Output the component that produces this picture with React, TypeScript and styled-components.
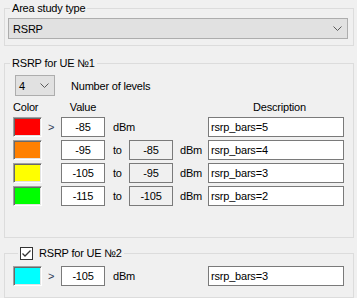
import React from 'react'
import styled, {createGlobalStyle} from 'styled-components'

const GlobalStyle = createGlobalStyle`
    html, body {
        margin: 0;
        padding: 0;
        background: #F0F0F0;
        overflow: hidden;
    }
    body {
        font-family: "Liberation Sans", Arial, sans-serif;
        font-size: 11px;
        letter-spacing: -0.2px;
        color: #000;
    }
`

const levels = [
    {color: '#FF0000', from: '-85', to: '', desc: 'rsrp_bars=5'},
    {color: '#FF8000', from: '-95', to: '-85', desc: 'rsrp_bars=4'},
    {color: '#FFFF00', from: '-105', to: '-95', desc: 'rsrp_bars=3'},
    {color: '#00FF00', from: '-115', to: '-105', desc: 'rsrp_bars=2'},
]

const Chevron = () => (
    <svg width="9" height="5" viewBox="0 0 9 5">
        <path d="M0.5 0.5 L4.5 4.5 L8.5 0.5" fill="none" stroke="#5a5a5a" strokeWidth="1" />
    </svg>
)

const App = () => {
  return (
    <Page>
        <GlobalStyle />
        <Group $mt={0} $pt={9} $pb={6} $pl={3}>
            <Caption $left={5}>Area study type</Caption>
            <Combo $w={340}>
                <span>RSRP</span>
                <Chevron />
            </Combo>
        </Group>

        <Group $mt={17} $pt={11} $pb={31} $pl={8}>
            <Caption $left={5}>RSRP for UE №1</Caption>
            <TopRow>
                <Combo $w={40} $ml={2} $pl={3}>
                    <span>4</span>
                    <Chevron />
                </Combo>
                <Label>Number of levels</Label>
            </TopRow>
            <HeaderRow>
                <Head>Color</Head>
                <span />
                <Head $center>Value</Head>
                <span />
                <span />
                <span />
                <Head $pl={45}>Description</Head>
            </HeaderRow>
            <Rows>
                {levels.map((l, i) => (
                    <LevelRow key={i}>
                        <Swatch $color={l.color} />
                        <Sign>{i === 0 ? '>' : ''}</Sign>
                        <Field readOnly value={l.from} $center />
                        {i === 0 ? (
                            <Unit $span={3} $pl={8}>dBm</Unit>
                        ) : (
                            <>
                                <Unit $pl={8}>to</Unit>
                                <Field readOnly value={l.to} $center $gray />
                                <Unit $pl={7}>dBm</Unit>
                            </>
                        )}
                        <Field readOnly value={l.desc} />
                    </LevelRow>
                ))}
            </Rows>
        </Group>

        <Group $mt={15} $pt={12} $pb={11} $pl={8}>
            <Caption $left={13}>
                <Check>
                    <svg width="11" height="11" viewBox="0 0 11 11">
                        <path d="M1.5 5.5 L4 8 L9.5 2.5" fill="none" stroke="#333" strokeWidth="1.3" />
                    </svg>
                </Check>
                RSRP for UE №2
            </Caption>
            <LevelRow>
                <Swatch $color="#00FFFF" />
                <Sign>&gt;</Sign>
                <Field readOnly value="-105" $center />
                <Unit $span={3} $pl={8}>dBm</Unit>
                <Field readOnly value="rsrp_bars=3" />
            </LevelRow>
        </Group>
    </Page>
  )
}

export default App

const Page = styled.div`
    width: 357px;
    height: 298px;
    box-sizing: border-box;
    padding: 8px 3px 0 4px;
`

const Group = styled.div<{$mt: number, $pt: number, $pb: number, $pl: number}>`
    position: relative;
    border: 1px solid #DCDCDC;
    margin-top: ${p => p.$mt}px;
    padding: ${p => p.$pt}px 0 ${p => p.$pb}px ${p => p.$pl}px;
`

const Caption = styled.div<{$left: number}>`
    position: absolute;
    top: -8px;
    left: ${p => p.$left}px;
    padding: 0 2px;
    height: 14px;
    line-height: 14px;
    background: #F0F0F0;
    display: flex;
    align-items: center;
    white-space: nowrap;
`

const Check = styled.div`
    width: 13px;
    height: 13px;
    box-sizing: border-box;
    border: 1px solid #333;
    background: #fff;
    margin-right: 6px;
    display: flex;
    align-items: center;
    justify-content: center;
`

const Combo = styled.div<{$w: number, $ml?: number, $pl?: number}>`
    width: ${p => p.$w}px;
    height: 21px;
    box-sizing: border-box;
    margin-left: ${p => p.$ml || 0}px;
    border: 1px solid #ADADAD;
    background: #E1E1E1;
    display: flex;
    align-items: center;
    justify-content: space-between;
    padding: 0 5px 0 ${p => p.$pl || 4}px;
`

const TopRow = styled.div`
    display: flex;
    align-items: center;
`

const Label = styled.div`
    margin-left: 16px;
`

const columns = '29px 19px 44px 24px 44px 35px 136px'

const HeaderRow = styled.div`
    display: grid;
    grid-template-columns: ${columns};
    height: 21px;
    align-items: center;
`

const Head = styled.div<{$center?: boolean, $pl?: number}>`
    text-align: ${p => p.$center ? 'center' : 'left'};
    padding-left: ${p => p.$pl || 0}px;
`

const Rows = styled.div`
    display: flex;
    flex-direction: column;
    gap: 3px;
`

const LevelRow = styled.div`
    display: grid;
    grid-template-columns: ${columns};
    height: 20px;
    align-items: center;
`

const Swatch = styled.div<{$color: string}>`
    height: 20px;
    box-sizing: border-box;
    background: ${p => p.$color};
    border: 1px solid;
    border-color: #A0A0A0 #FFFFFF #FFFFFF #A0A0A0;
    box-shadow: inset 1px 1px 0 #696969, inset -1px -1px 0 #E3E3E3;
`

const Sign = styled.div`
    padding-left: 6px;
    color: #2B3A55;
`

const Unit = styled.div<{$span?: number, $pl: number}>`
    grid-column: span ${p => p.$span || 1};
    padding-left: ${p => p.$pl}px;
`

const Field = styled.input<{$center?: boolean, $gray?: boolean}>`
    width: 100%;
    height: 20px;
    box-sizing: border-box;
    margin: 0;
    border: 1px solid #7A7A7A;
    background: ${p => p.$gray ? '#F0F0F0' : '#FFFFFF'};
    padding: 0 2px;
    font-family: inherit;
    font-size: 11px;
    letter-spacing: -0.2px;
    color: #000;
    text-align: ${p => p.$center ? 'center' : 'left'};
    outline: none;
`
